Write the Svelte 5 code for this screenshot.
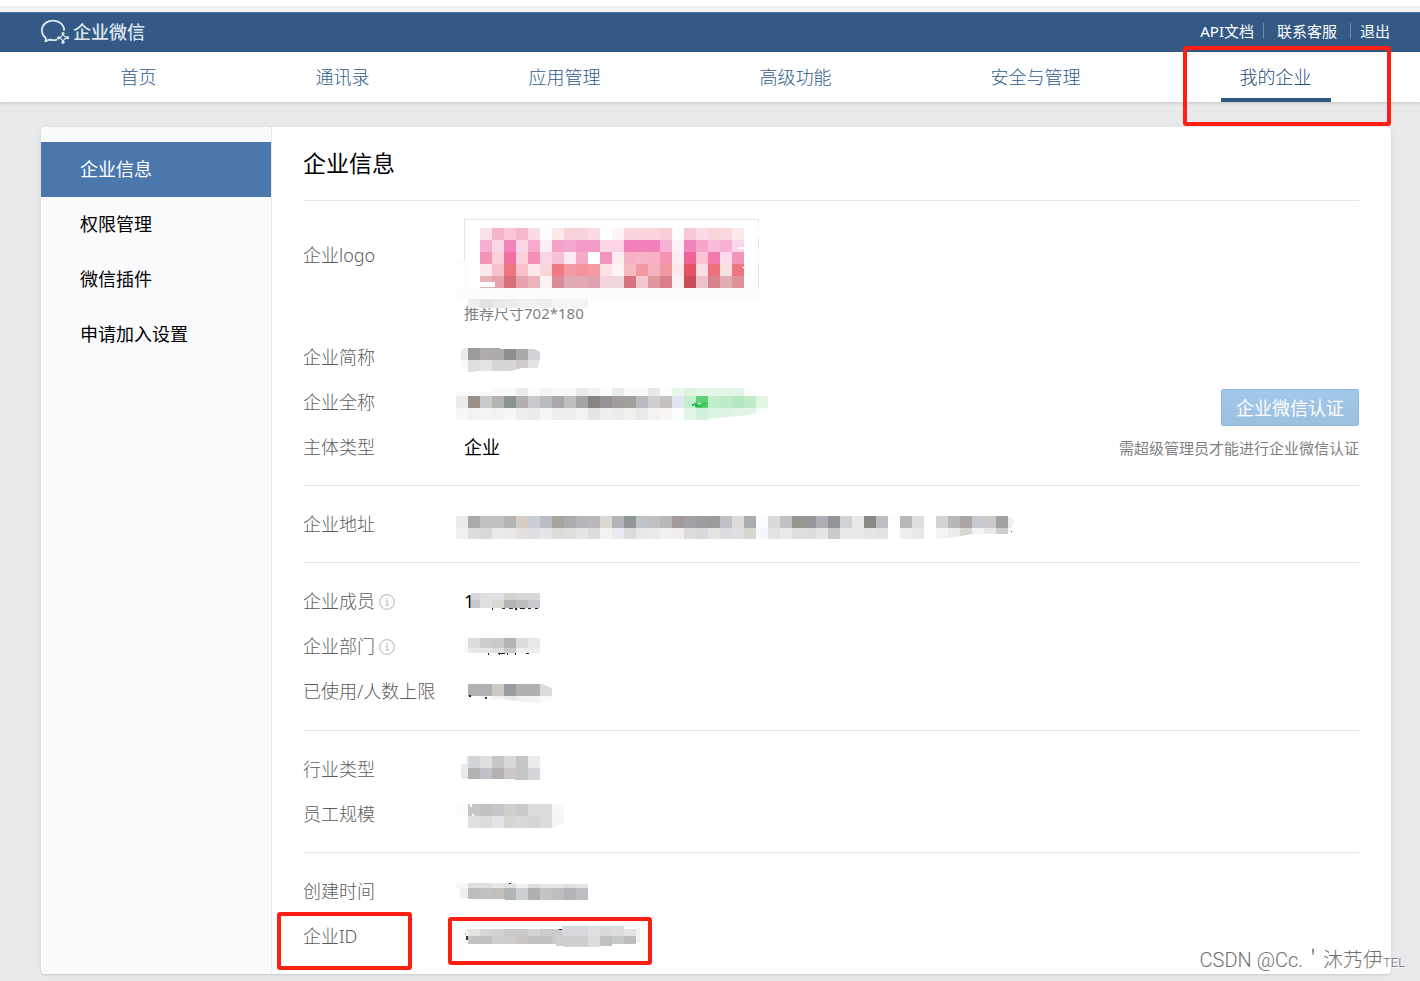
<script>
  const topLinks = ['API文档', '联系客服', '退出'];
  const navItems = ['首页', '通讯录', '应用管理', '高级功能', '安全与管理', '我的企业'];
  const sideItems = ['企业信息', '权限管理', '微信插件', '申请加入设置'];

  let activeNav = '我的企业';
  let activeSide = '企业信息';

  // strips of blocks that cover private values: x, y, height, colors, block width (12 by default)
  const logo = [
    [0, 41, 32, 'fdfdfd'],
    [24, 9, 12, 'fbe0e9 f6b4c9 f9c6d8 f7b7ca fbdbe6 fffdfe fde9ea f9d3da f9d3da fbdbe4 ffffff fef6f6 fad5dc fad5dc fad5dc f8cdd6 fffcfd f8c8d5 fbdbe6 f9d4d9 fad7dc fce9e9'],
    [24, 21, 12, 'f6aed2 fad5e6 f183b8 fad5e6 f6aace fdedf5 f4a2c9 f5a8ce f39ac5 f39ac5 fbd4e6 fbd5e7 f182b9 f182b9 f182b9 f5b2d2 fdf0f6 f083bb f6a5cd f8bcda f7b2d3 fbd6e8'],
    [24, 33, 12, 'f393b7 fad0db f070a0 fad0db f490b5 fbd5e5 f8c0d6 fceaf2 f7a9c8 ffffff f394bc feedf0 f8b0c2 f8b4c7 f8b0c2 f394b0 fdedf2 ef6398 fac2d3 f27bac fcdcec f294b8'],
    [24, 45, 12, 'fceaea f8c0cb ee747f f8c0cb fce6ea f9d5d8 f07985 f59aa4 f5939d f59aa4 fce1e5 fef6f6 f5b9c0 f099a2 f3b3bc f099a2 fce9ea e65262 fbe0e3 ed717c fbe0e2 ec7780'],
    [24, 57, 12, 'eab3b9 e6a3ab d66f7b e6a3ab ecb3bb fcf2f2 d88c99 e1aab2 e1aab2 dea3ae f1d6d9 f1d6d9 d5737f f1c8ce e197a2 d97f8a fbf1f2 c84c5c ebc3c9 d8828e e2acb5 dd9299'],
    [24, 63, 5, 'ffffff', 15],
    [282, 28, 2, 'ffffff', 6],
    [286, 48, 1, 'ffffff', 2],
    [0, 69, 12, 'fcfcfc', 303],
    [300, 4, 14, 'fdfdfd', 10],
    [300, 30, 15, 'fdfdfd', 10],
    [12, 80, 9, 'eeeeee e2e2e2 e9e9e9 ebebeb efefef efefef eeeeee f2f3f2 f3f4f3 f2f4f3']
  ];

  const shortName = {
    strips: [
      [5, 13, 12, 'ebebe8', 7],
      [12, 13, 12, '999b9d b0abab ababab 8e8e8e a9a7a8 d0d2d5'],
      [5, 25, 9, 'f8f8f6', 7],
      [12, 25, 12, 'dfdfe0 e4e4e4 d6d6d6 d6d6d6 cecbca e3e3e3']
    ],
    clip: 'M8 13H44V14H78L84 17V24L82 33H66L58 35L54 36H20L18 37H12L7 34L5 27V16Z'
  };

  const fullName = {
    strips: [
      [0, 12, 4, 'fafafa fafafa f8f8f8'],
      [36, 8, 8, 'fbf9f8 f7f9fa ebebeb fbfdfc f4f4f4 f8f8f8 f8f8f8 eae9e7 f3f0ee fafdfc ebebeb f9f9fa faf9f7 e9e8e7 fcfdfe e7f7ea def4e2 e2f5e6 e2f5e6 e2f5e6 e2f5e6 fafdfb'],
      [0, 16, 12, 'ebebea 989088 c5cbcc b3b3af 8b9391 b3afb1 c9c8cb b9bbbe aaa6a9 bfbfc1 a5a5a5 888482 969496 a29ba0 a0a19b bab9c1 d1cdcd c4c2be e1e7f2 c4efcd 5dd078 c3eecb beecc8 b5e8c0 c0ebc9 e3f6e6'],
      [0, 28, 12, 'f8f7f5 f2f2f3 f5f5f5 f1f2f1 f7f8f7 edefed e9ecea f6f6f6 efeff0 eeeef0 f3f3f4 e6e6e6 eeeeef ececee f0f0ed e9e9ea f2f2f2 f8f5f3 fbfdff e2f6e6 d3f1da ddf4e2 ddf4e2 e0f5e5 e0f5e5 f5fbf6'],
      [236, 24, 2, '1fba48', 2],
      [239, 25, 1, '1fba48', 11],
      [238, 23, 2, '1fba48', 3],
      [239, 26, 1, '1fba48', 7],
      [245, 23, 1, '1fba48', 7],
      [242, 23, 1, 'e2f6e6', 3]
    ],
    clip: 'M0 12H32L40 8H312V29L302 33L284 36L258 38L250 40H0Z'
  };

  const address = {
    strips: [
      [0, 14, 12, 'ecede8 aaaaaa c3c2c0 c3c2c0 b1b4b3 d4cec7 c7ced5 b9bcc1 a6a69f acacac b6b6ba bcb8b9 dad6d1 b3b2bb 919796 bec4c8 c0c0c0 b8b9b7 a39b9a a1a2a6 9c9da1 9b9c99 c0bfc8 dfdad6 a9adae f9fbfe dadada c2c2c2 96968f 969597 b1aeb5 939598 ced3d4 e8e8e8 888983 bebdc5 fefdfb b8b8b8 dddee0 ffffff d3d3d3 b9b7b5 aba6a4 c5cad2 cccac9 a3a2a0 e9eef2'],
      [0, 26, 11, 'f1f1ef dddbdc d9d9dc eaeae9 e7e7e8 e5e0dc dedfe1 e4e6ea dcdcd8 dededd e6e5e7 dcdcdd f3f2f0 eaeaf0 dadbdb e6e8e9 eaeaea f0f0f0 f1eeed dcdbdc d9dade e4e4e1 dcdce1 e0dfe0 d7d6d1 f5f9fd e4e2e0 e7eaed dedede dcdddf e6e6e8 c9cbcc e7e7e7 e8e8e8 e5e7e6 e3e3e3 ffffff ededed e8e8e8 ffffff f4f4f4 ececec dad7d3 f1f3f6 e8e8e7 cfcecd f3f5f7'],
      [555, 29, 1, '3c7fb8', 1]
    ],
    clip: 'M0 14H551L558 18V20L554 28H556V30H552V32H516L500 35L484 37H0Z'
  };

  const members = {
    strips: [
      [15, 14, 7, 'd7d7da', 9],
      [24, 14, 7, 'e0e0e0 e1e1e3 d4d4cf d6d6d6 d8d8da'],
      [15, 21, 8, 'c9c8c8', 9],
      [24, 21, 8, 'dfe1e0 dbd7d3 b3b3b3 bdbdbd c8c9cc'],
      [36, 29, 2, '222222', 1],
      [46, 29, 1, '333333', 3],
      [53, 29, 1, '333333', 4],
      [59, 29, 2, '222222', 2],
      [64, 29, 1, '222222', 5],
      [72, 29, 1, '222222', 3],
      [79, 29, 1, '222222', 3]
    ]
  };

  const departments = {
    strips: [
      [8, 14, 14, 'fafafa', 4],
      [12, 14, 10, 'dcdcdc cdcccd c9c9c9 b4b3b5 dcdddd e6e9e8'],
      [12, 24, 5, 'e9e9ea e6e6e6 dedede cfcac8 f0f0f0 ececec'],
      [32, 29, 2, '222222', 1],
      [42, 29, 1, '222222', 7],
      [43, 30, 1, '222222', 1],
      [51, 29, 2, '222222', 1],
      [59, 29, 2, '222222', 1],
      [70, 29, 1, '222222', 3]
    ]
  };

  const usage = {
    strips: [
      [12, 15, 12, 'b1b1b2 b1b1b2 cec8c2 999da2 b0b0b0 b0b0b0 dcdcdd'],
      [30, 27, 7, 'fafafa', 6],
      [36, 27, 7, 'f3f3f3 e9e9ea f0f0f1 f3f3f3 fafafc'],
      [13, 26, 2, '222222', 2],
      [29, 28, 2, '333333', 2]
    ],
    clip: 'M12 15H86L96 19V34H80L60 32L44 30L32 31L12 28Z'
  };

  const industry = {
    strips: [
      [10, 9, 8, 'f0eeee', 2],
      [5, 17, 15, 'ece9ea', 7],
      [12, 9, 12, 'd1d5d7 dddee0 cac5c5 d8d8d7 c5c6c4 ececec'],
      [12, 21, 11, 'b3b2b1 c1c2c9 b5b0b2 ccc6c5 c4c6c6 d5d5da'],
      [58, 32, 1, 'c4c6c6 d5d5da', 13]
    ]
  };

  const scale = {
    strips: [
      [1, 12, 12, 'fbfbf9', 11],
      [12, 12, 12, 'c6c6c6 c2c2c1 c4c6ca cfcfce c9c9c9 dcdcdb dcdcdb f6f7f7'],
      [12, 24, 12, 'e0e0e0 dcdcdc e2e4e7 d5d5d4 d8d8d8 d6d6d6 d9dcdb f3f6f5'],
      [14, 12, 3, 'ffffff', 2],
      [16, 22, 2, 'ffffff', 2]
    ],
    clip: 'M1 12H105L108 15V30L98 36H12V24H1Z'
  };

  const created = {
    strips: [
      [0, 14, 5, 'f7f7f7'],
      [12, 14, 5, 'dfdfdf dfdfdf e9e9e8 dfe1e1 f0f0f0 dededd e6e8e7 e6e4e4 dfe0df e3e4e7'],
      [4, 19, 10, 'efeeed', 8],
      [12, 19, 12, 'bcbdbf c3c2c3 c5bfbb b2b5b3 cacfd1 b0b0ae c2c5c4 bebebe b4b3b9 bfbec4'],
      [53, 14, 1, '444444', 2]
    ],
    clip: 'M3 14H56L60 15H132V31H49V30H14L4 29V22L0 21V16Z'
  };

  const corpId = {
    strips: [
      [9, 19, 2, 'd8a068', 1],
      [10, 22, 4, '333333', 2],
      [9, 15, 4, 'f0f0f0', 3],
      [12, 15, 7, 'e3e3e1 d4d7d6 d2d2d2 c9c9c9 c9c9ca d5d4d5 ccccd0 cbcbcb'],
      [12, 22, 8, 'c0c3c2 c2c2c4 cfcfcd cccccc cac5c2 c2c2c4 c2c2c4 c9c9cb'],
      [106, 12, 10, 'd9d9dd', 14],
      [120, 12, 10, 'd9d9dd e0e0df dadada dcdedd'],
      [168, 15, 7, 'e6e2df'],
      [180, 14, 15, 'eeeff3', 4],
      [100, 22, 10, 'cfcfcf', 8],
      [108, 22, 11, 'cfcfcf cfcfcf dcdcdb'],
      [144, 22, 10, 'c0c0c3'],
      [156, 22, 8, 'c4c8c6 bcbcbc'],
      [103, 15, 1, '222222', 3]
    ]
  };
</script>

{#snippet mosaic(strips, clip, id)}
  <svg class="mosaic" width="600" height="45" shape-rendering="crispEdges" aria-hidden="true">
    {#if clip}
      <clipPath id={id}><path d={clip} /></clipPath>
    {/if}
    <g clip-path={clip ? `url(#${id})` : undefined}>
      {#each strips as [x, y, h, colors, w = 12]}
        {#each colors.split(' ') as color, i}
          <rect x={x + i * w} {y} width={w} height={h} fill={'#' + color} />
        {/each}
      {/each}
    </g>
  </svg>
{/snippet}

{#snippet infoIcon()}
  <svg class="info" width="16" height="16" viewBox="0 0 16 16" fill="none" stroke="#c6c6c6">
    <circle cx="8" cy="8" r="7.3" stroke-width="1.3" />
    <path d="M7.2 4.7H9M6.4 7.2H8.4V11M6.2 11.2H10.2" stroke-width="1.3" />
  </svg>
{/snippet}

<div class="strip"></div>
<header>
  <a class="brand" href="#home">
    <svg width="30" height="28" viewBox="0 0 30 28" fill="none" stroke="#dde6ef" stroke-width="1.8" stroke-linejoin="round">
      <path d="M24.3 13.6C24.1 7.8 19.4 3.6 13 3.6C6.4 3.6 1.9 8 1.9 13.3C1.9 16.6 3.3 19.2 5.9 21L5.4 24.3L9.3 22.7C12 23.4 14.4 23.4 17.2 22.6" />
      <path d="M23 16.6C23.4 18.6 25 20.2 27.4 20.6C25 21.1 23.5 22.7 23 25.2C22.5 22.8 21 21.3 18.6 20.8C21 20.3 22.5 18.9 23 16.6Z" stroke-width="1.1" />
      <g fill="#dde6ef" stroke="none">
        <circle cx="23" cy="16.6" r="1.6" />
        <circle cx="27.6" cy="20.7" r="1.6" />
        <circle cx="23" cy="25.2" r="1.6" />
        <circle cx="18.6" cy="20.9" r="1.6" />
      </g>
      <circle cx="23" cy="20.8" r="1.3" fill="#335984" stroke="none" />
    </svg>
    <span>企业微信</span>
  </a>
  <div class="top-links">
    {#each topLinks as link}
      <a href="#top">{link}</a>
    {/each}
  </div>
</header>

<nav class="main-nav">
  {#each navItems as item}
    <a href="#nav" class:active={item === activeNav} on:click|preventDefault={() => (activeNav = item)}>
      <span>
        {item}
        {#if item === '我的企业'}<i class="mark mark-nav"></i>{/if}
      </span>
    </a>
  {/each}
</nav>

<div class="card">
  <aside>
    {#each sideItems as item}
      <a href="#side" class:active={item === activeSide} on:click|preventDefault={() => (activeSide = item)}>{item}</a>
    {/each}
  </aside>

  <main>
    <h1>企业信息</h1>

    <section>
      <dl>
        <div class="row logo-row">
          <dt>企业logo</dt>
          <dd>
            <div class="logo-box"></div>
            <p>推荐尺寸702*180</p>
            {@render mosaic(logo)}
          </dd>
        </div>
        <div class="row">
          <dt>企业简称</dt>
          <dd>{@render mosaic(shortName.strips, shortName.clip, 'clip-short')}</dd>
        </div>
      </dl>
      <div class="verify-group">
        <dl>
          <div class="row">
            <dt>企业全称</dt>
            <dd>{@render mosaic(fullName.strips, fullName.clip, 'clip-full')}</dd>
          </div>
          <div class="row">
            <dt>主体类型</dt>
            <dd>企业</dd>
          </div>
        </dl>
        <div class="verify">
          <button type="button">企业微信认证</button>
          <p>需超级管理员才能进行企业微信认证</p>
        </div>
      </div>
    </section>

    <section>
      <dl>
        <div class="row">
          <dt>企业地址</dt>
          <dd>{@render mosaic(address.strips, address.clip, 'clip-address')}</dd>
        </div>
      </dl>
    </section>

    <section class="people">
      <dl>
        <div class="row">
          <dt>企业成员{@render infoIcon()}</dt>
          <dd>1{@render mosaic(members.strips)}</dd>
        </div>
        <div class="row">
          <dt>企业部门{@render infoIcon()}</dt>
          <dd>{@render mosaic(departments.strips)}</dd>
        </div>
        <div class="row">
          <dt>已使用/人数上限</dt>
          <dd>{@render mosaic(usage.strips, usage.clip, 'clip-usage')}</dd>
        </div>
      </dl>
    </section>

    <section>
      <dl>
        <div class="row">
          <dt>行业类型</dt>
          <dd>{@render mosaic(industry.strips)}</dd>
        </div>
        <div class="row">
          <dt>员工规模</dt>
          <dd>{@render mosaic(scale.strips, scale.clip, 'clip-scale')}</dd>
        </div>
      </dl>
    </section>

    <section>
      <dl>
        <div class="row">
          <dt>创建时间</dt>
          <dd>{@render mosaic(created.strips, created.clip, 'clip-created')}</dd>
        </div>
        <div class="row">
          <dt>企业ID<i class="mark mark-label"></i></dt>
          <dd>{@render mosaic(corpId.strips)}<i class="mark mark-value"></i></dd>
        </div>
      </dl>
    </section>
  </main>
</div>

<div class="watermark">CSDN @Cc.＇沐艿伊<small>TEL</small></div>

<style>
  :global(body) {
    background: #e7e9eb;
    font-family: "Noto Sans", "Noto Sans CJK SC", sans-serif;
    font-size: 18px;
    font-weight: 300;
    color: #000;
  }
  a {
    text-decoration: none;
    color: inherit;
  }
  .strip {
    height: 6px;
    background: #f2f2f2;
    border-top: 6px solid #fff;
  }
  header {
    display: flex;
    justify-content: space-between;
    align-items: center;
    height: 40px;
    padding: 0 30px 4px 40px;
    box-sizing: border-box;
    background: #335984;
    border-top: 1px solid #51759d;
    color: #fff;
  }
  .brand {
    display: flex;
    align-items: center;
    gap: 3px;
    color: #dde6ef;
    font-weight: 500;
  }
  .brand svg {
    display: block;
  }
  .top-links {
    display: flex;
    font-size: 15px;
    font-weight: 400;
    line-height: 16px;
  }
  .top-links a {
    padding-left: 13px;
  }
  .top-links a + a {
    border-left: 1px solid #6f8caf;
  }
  .top-links a:not(:last-child) {
    padding-right: 9px;
  }
  .top-links a:nth-child(2) {
    padding-right: 13px;
  }
  .top-links a:last-child {
    padding-left: 9px;
  }
  .main-nav {
    display: flex;
    height: 50px;
    padding: 0 29px 0 41px;
    background: #fff;
    box-shadow: 0 1px 3px rgba(0, 0, 0, 0.18);
    color: #2d5a8e;
  }
  .main-nav a {
    flex: 1 1 auto;
    display: flex;
    justify-content: center;
  }
  .main-nav span {
    position: relative;
    height: 50px;
    padding: 0 19px;
    box-sizing: border-box;
    line-height: 50px;
  }
  .main-nav .active {
    color: #1f4a7c;
  }
  .main-nav .active span {
    border-bottom: 4px solid #2f5785;
  }
  .card {
    display: flex;
    margin: 25px 29px 7px 41px;
    background: #fff;
    border-radius: 4px;
    box-shadow: 0 1px 3px rgba(0, 0, 0, 0.15);
  }
  aside {
    flex: 0 0 230px;
    padding-top: 15px;
    background: #f9fafc;
    border-right: 1px dotted #d8dadd;
    border-radius: 4px 0 0 4px;
    font-weight: 400;
  }
  aside a {
    display: block;
    padding-left: 39px;
    line-height: 55px;
  }
  aside a.active {
    background: #4a78ad;
    color: #fff;
  }
  main {
    flex: 1;
    padding: 0 32px 0 31px;
  }
  h1 {
    margin: 0;
    font-size: 23px;
    font-weight: 400;
    line-height: 73px;
    border-bottom: 1px solid #e4e6e9;
  }
  section {
    padding: 16px 0 15px;
  }
  section.people {
    padding-bottom: 16px;
  }
  section + section {
    border-top: 1px solid #e4e6e9;
  }
  dl,
  dd,
  p {
    margin: 0;
  }
  .row {
    display: flex;
    line-height: 45px;
  }
  dt {
    position: relative;
    display: flex;
    align-items: center;
    flex: 0 0 161px;
    color: #5c5c5c;
  }
  dd {
    position: relative;
    flex: 1;
    min-height: 45px;
    font-weight: 400;
  }
  .mosaic {
    position: absolute;
    top: 0;
    left: -8px;
    overflow: visible;
  }
  .info {
    margin-left: 4px;
  }
  .logo-row {
    height: 118px;
  }
  .logo-row dt {
    height: 77px;
  }
  .logo-row .mosaic {
    top: 2px;
  }
  .logo-box {
    width: 293px;
    height: 76px;
    margin-top: 2px;
    border: 1px solid #e2e4e6;
  }
  .logo-row p,
  .verify p {
    font-size: 15px;
    font-weight: 400;
    color: #808080;
  }
  .logo-row p {
    line-height: 32px;
  }
  .verify-group {
    display: flex;
    justify-content: space-between;
  }
  .verify-group dl {
    flex: 1;
  }
  .verify {
    padding-top: 9px;
    text-align: right;
  }
  .verify p {
    line-height: 44px;
  }
  button {
    display: block;
    height: 37px;
    margin-left: auto;
    padding: 0 14px 2px;
    font: inherit;
    font-weight: 400;
    color: #fff;
    background: linear-gradient(#a2c8eb, #9bbfdf);
    border: 1px solid #8dbbdd;
    border-radius: 2px;
    cursor: pointer;
  }
  .mark {
    position: absolute;
    box-sizing: border-box;
    border: 4px solid #ff1f12;
    border-radius: 3px;
    pointer-events: none;
  }
  .mark-nav {
    top: -6px;
    left: -38px;
    width: 208px;
    height: 80px;
  }
  .mark-label {
    top: -2px;
    left: -26px;
    width: 135px;
    height: 58px;
  }
  .mark-value {
    top: 3px;
    left: -16px;
    width: 204px;
    height: 48px;
  }
  .watermark {
    position: absolute;
    right: 15px;
    bottom: 4px;
    font-family: Roboto, "Noto Sans CJK SC", sans-serif;
    font-size: 20px;
    font-weight: 300;
    line-height: 28px;
    color: #707070;
    text-shadow: 1px 1px 0 #fff;
    pointer-events: none;
  }
  .watermark small {
    font-size: 13px;
  }
</style>
